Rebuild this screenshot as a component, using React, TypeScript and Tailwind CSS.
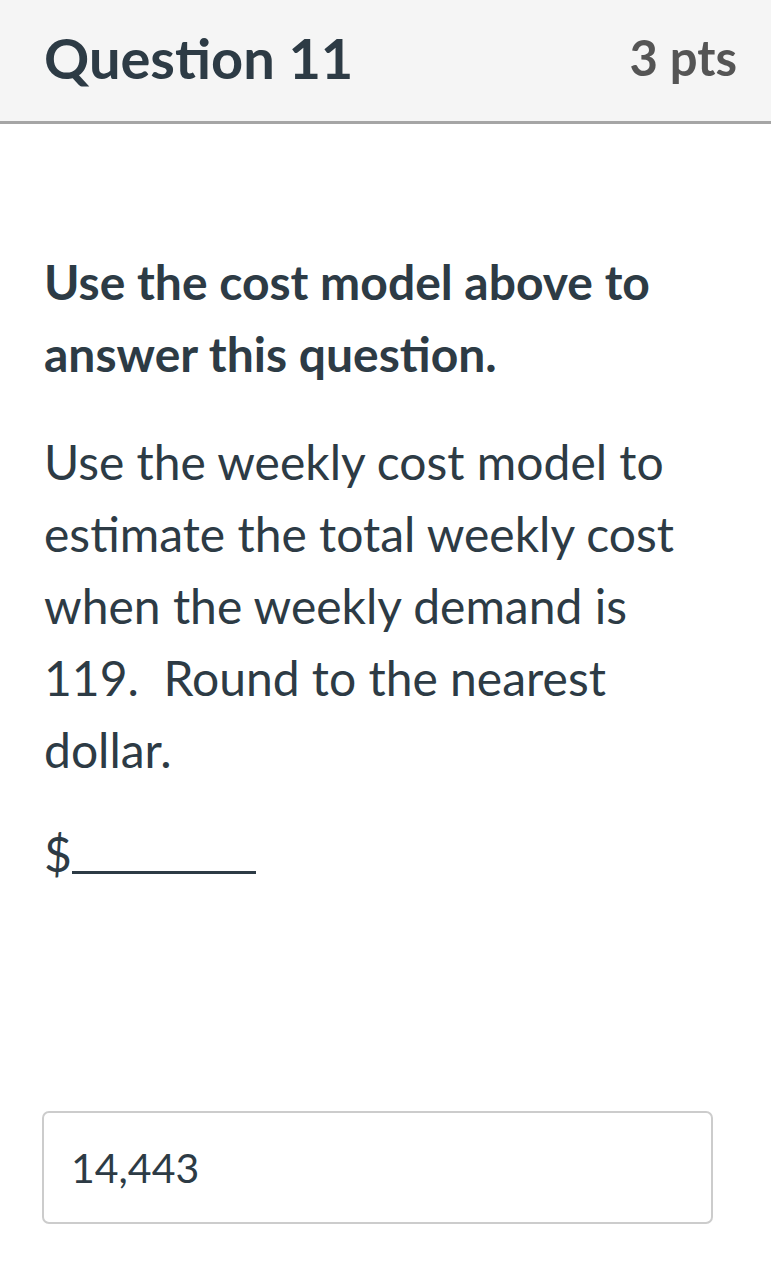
import React from 'react';

const App = () => {
   return (
      <div className="min-h-[1285px] bg-white text-[#2d3b45]" style={{ fontFamily: 'Lato, "Noto Sans", sans-serif' }}>
         {/* header */}
         <div className="flex h-[124px] items-center justify-between border-b-[3px] border-[#a5a5a5] bg-[#f5f5f5] pb-[6px] pl-[44px] pr-[34px]">
            <h2 className="text-[56px] font-bold leading-none">Question 11</h2>
            <span className="text-[49px] font-bold leading-none text-[#555555]">3 pts</span>
         </div>

         {/* body */}
         <div className="px-[44px] pt-[122px]">
            <p className="text-[48px] font-bold leading-[72px]">Use the cost model above to answer this question.</p>
            <p className="mt-[36px] text-[48px] leading-[72px]">
               Use the weekly cost model to estimate the total weekly cost when the weekly demand is 119.&nbsp; Round to the nearest dollar.
            </p>
            <p className="mt-[32px] flex items-end text-[48px] leading-[72px]">
               <span>$</span>
               <span className="mb-[16px] inline-block w-[184px] border-b-[3px] border-[#2d3b45]"></span>
            </p>
         </div>

         {/* answer */}
         <div className="px-[42px] pt-[221px]">
            <div className="flex h-[113px] w-[671px] items-center rounded-[7px] border-2 border-[#cccccc] px-[27px] text-[41px]">
               14,443
            </div>
         </div>
      </div>
   );
};

export default App;
